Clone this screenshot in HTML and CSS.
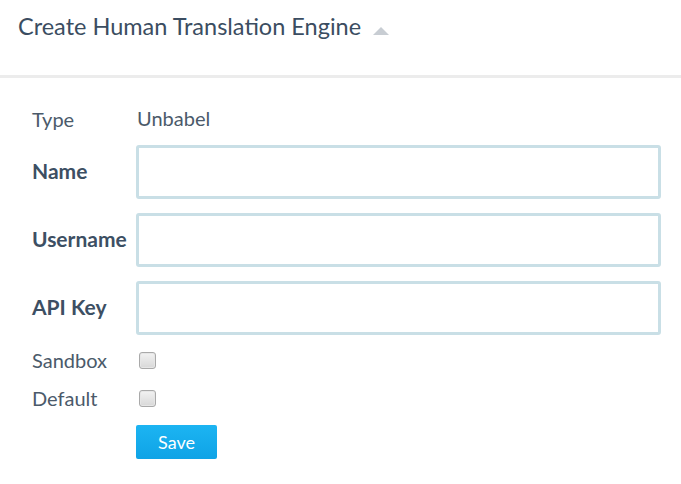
FILE: index.html
```html
<!DOCTYPE html>
<html lang="en">
<head>
<meta charset="utf-8">
<title>Create Human Translation Engine</title>
<link rel="stylesheet" href="styles.css">
</head>
<body>
<div class="panel">
  <div class="panel-header">
    <h1 class="title">Create Human Translation Engine</h1>
    <span class="caret"></span>
  </div>
  <form class="form">
    <div class="row row-type">
      <span class="label">Type</span>
      <span class="value">Unbabel</span>
    </div>
    <div class="row row-input">
      <label class="label bold" for="name">Name</label>
      <input class="text-input" id="name" type="text">
    </div>
    <div class="row row-input">
      <label class="label bold" for="username">Username</label>
      <input class="text-input" id="username" type="text">
    </div>
    <div class="row row-input">
      <label class="label bold" for="apikey">API Key</label>
      <input class="text-input" id="apikey" type="text">
    </div>
    <div class="row row-check row-sandbox">
      <label class="label" for="sandbox">Sandbox</label>
      <span class="checkbox" id="sandbox"></span>
    </div>
    <div class="row row-check row-default">
      <label class="label" for="default">Default</label>
      <span class="checkbox" id="default"></span>
    </div>
    <div class="row row-actions">
      <span></span>
      <button class="btn-save" type="button">Save</button>
    </div>
  </form>
</div>
</body>
</html>
```
FILE: styles.css
```css
html, body {
  margin: 0;
  padding: 0;
  background: #fff;
}
body {
  font-family: "Lato", "Open Sans", sans-serif;
  color: #3d4f63;
}
.panel-header {
  border-bottom: 3px solid #ececec;
  display: flex;
  align-items: flex-start;
  padding-left: 18px;
  box-sizing: border-box;
  height: 78px;
}
.title {
  margin: 11px 0 0 0;
  font-size: 23.5px;
  font-weight: 400;
  line-height: 30px;
  color: #3b4d61;
}
.caret {
  width: 0;
  height: 0;
  border-left: 8px solid transparent;
  border-right: 8px solid transparent;
  border-bottom: 8px solid #c8cdd3;
  margin: 27px 0 0 12px;
}
.form {
  padding: 0 20px 0 32px;
  display: flex;
  flex-direction: column;
}
.row {
  display: grid;
  grid-template-columns: 104px 1fr;
  align-items: center;
}
.label {
  font-size: 20px;
  color: #4b5a6a;
}
.label.bold {
  font-weight: 700;
  font-size: 21px;
  color: #3d4f63;
  margin-bottom: 3px;
}
.row-type {
  margin-top: 28px;
  height: 30px;
  align-items: start;
}
.row-type .label { margin-top: 1px; }
.value {
  font-size: 20px;
  color: #4b5a6a;
  margin-left: 1px;
}
.row-input {
  margin-top: 14px;
}
.row-type + .row-input { margin-top: 9px; }
.text-input {
  box-sizing: border-box;
  height: 54px;
  width: 525px;
  border: 3px solid #c9dfe6;
  border-radius: 3px;
  background: #fff;
  outline: none;
  margin: 0;
}
.row-check {
  height: 38px;
}
.row-sandbox { margin-top: 6px; }
.checkbox {
  display: block;
  box-sizing: border-box;
  width: 17px;
  height: 17px;
  margin-left: 3px;
  border: 1px solid #a9a9a9;
  border-radius: 3px;
  background: linear-gradient(#f2f2f2, #d8d8d8);
  box-shadow: inset 0 0 0 1px #e6e6e6;
}
.row-actions {
  margin-top: 8px;
}
.btn-save {
  width: 81px;
  height: 34px;
  border: none;
  border-radius: 2px;
  background: linear-gradient(#1cb4f2, #0fa3e6);
  color: #fff;
  font-family: "Lato", "Open Sans", sans-serif;
  font-size: 18px;
  padding: 0;
  margin: 0;
}
```
